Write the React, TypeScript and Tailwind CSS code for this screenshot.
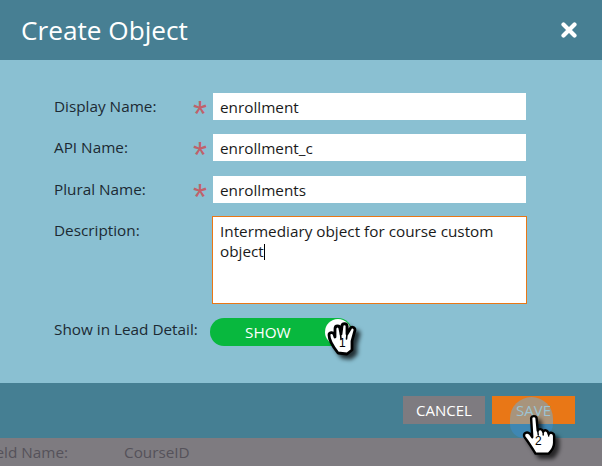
function Field({ label, value, gap }: { label: string; value: string; gap: string }) {
  return (
    <div className={`flex items-center h-[27px] ${gap}`}>
      <div className="w-[140px] text-[15.3px] text-[#1c2a33]">{label}</div>
      <div className="w-[19px] h-[27px] -ml-[1px] mr-[1px] text-[36px] leading-[43px] text-[#c0626b] font-['Liberation_Sans',sans-serif]">*</div>
      <div className="w-[313px] h-[27px] bg-white pl-[7px] text-[15.3px] leading-[29px] text-[#1a1a1a]">{value}</div>
    </div>
  );
}

export default function App() {
  return (
    <div className="relative w-[602px] h-[466px] overflow-hidden bg-[#7e7b80] font-['Open_Sans',sans-serif]">
      <div className="h-[60px] bg-[#477f93] flex items-center justify-between pl-[21px] pr-[25px]">
        <h1 className="text-[26.2px] text-white leading-[60px]">Create Object</h1>
        <svg width="16" height="16" viewBox="0 0 16 16">
          <path d="M2.5 2.5 L13.5 13.5 M13.5 2.5 L2.5 13.5" stroke="#fff" strokeWidth="4.2" strokeLinecap="round" />
        </svg>
      </div>

      <div className="h-[323px] bg-[#8ac0d2] pl-[54px] pt-[33px]">
        <Field label="Display Name:" value="enrollment" gap="mb-[14px]" />
        <Field label="API Name:" value="enrollment_c" gap="mb-[15px]" />
        <Field label="Plural Name:" value="enrollments" gap="" />
        <div className="flex mt-[13px]">
          <div className="w-[158px] text-[15.3px] leading-[21px] text-[#1c2a33] pt-[4px]">Description:</div>
          <div className="w-[315px] h-[88px] bg-white border border-[#e97716] px-[7px] pt-[4px] text-[15.3px] leading-[20px] text-[#1a1a1a]">
            Intermediary object for course custom
            <br />
            object<span className="inline-block w-px h-[16px] bg-black align-[-3px]" />
          </div>
        </div>
        <div className="flex items-center mt-[14px]">
          <div className="w-[156px] text-[15.3px] text-[#1c2a33] -mt-[5px]">Show in Lead Detail:</div>
          <div className="w-[142px] h-[28px] rounded-full bg-[#08b83e] flex items-center justify-between pr-[1px]">
            <span className="pl-[35px] text-[15.3px] text-white">SHOW</span>
            <span className="w-[26px] h-[26px] rounded-full bg-white" />
          </div>
        </div>
      </div>

      <div className="h-[55px] bg-[#457f93] flex items-start justify-end gap-[7px] pr-[27px] pt-[13px]">
        <div className="w-[82px] h-[28px] bg-[#7e7b80] text-white text-[15px] leading-[28px] text-center">CANCEL</div>
        <div className="w-[83px] h-[28px] bg-[#e97716]" />
      </div>

      <div className="flex text-[15.3px] text-[#55525a] pt-[3px] whitespace-nowrap">
        <div className="w-[124px] shrink-0 flex justify-end pr-[56px]">Field Name:</div>
        <div>CourseID</div>
      </div>

      {/* click ripple on Save */}
      <div className="absolute left-[510px] top-[397px] w-[43px] h-[27px] rounded-t-[22px] bg-[#a8947c]" />
      <div className="absolute left-[510px] top-[424px] w-[43px] h-[14px] rounded-b-[22px] bg-[#3f87b3]" />
      <div className="absolute left-[492px] top-[396px] w-[83px] h-[28px] text-center text-[15px] leading-[28px] text-[#9cc3d3]">SAVE</div>

      <div className="absolute left-[325px] top-[320px]">
        <svg width="40" height="42" viewBox="0 0 40 42" className="drop-shadow-[4px_4px_2px_rgba(0,0,0,0.75)]">
          <path
            d="M13 33 C9 28 4 20 4 15 C4 12 8 12 9 14 L10 17 L10 9 C10 5 15 5 15 9 L16 14 L17 6 C17 3 22 3 22 6 L22 14 L25 9 C26 6 30 7 30 10 L27 21 L27 30 L22 34 Z"
            fill="#fff"
            stroke="#000"
            strokeWidth="2.8"
            strokeLinejoin="round"
          />
          <path d="M15.5 14 L16 19 M22 14 L21.5 19" stroke="#000" strokeWidth="1.6" strokeLinecap="round" />
        </svg>
        <span className="absolute left-[14px] top-[16px] text-[12px] leading-[14px] font-['Liberation_Sans',sans-serif] text-black">1</span>
      </div>

      <div className="absolute left-[520px] top-[412px]">
        <svg width="42" height="46" viewBox="0 0 38 42" className="drop-shadow-[4px_4px_2px_rgba(0,0,0,0.7)]">
          <path
            d="M10 6 C10 3 15 3 15 6 L16 17 C17 15 20 15 21 18 C22 16 25 16 26 20 C27 18 31 19 31 22 L31 28 C31 32 28 36 26 38 L14 38 C11 33 8 28 4 23 C2 20 6 17 9 20 L11 23 Z"
            fill="#fff"
            stroke="#000"
            strokeWidth="2.2"
            strokeLinejoin="round"
          />
          <path d="M16 17 L16.5 21 M21 18 L21 21 M26 20 L26 22" stroke="#000" strokeWidth="1.3" strokeLinecap="round" />
        </svg>
        <span className="absolute left-[15px] top-[22px] text-[12px] leading-[14px] font-['Liberation_Sans',sans-serif] text-black">2</span>
      </div>
    </div>
  );
}
